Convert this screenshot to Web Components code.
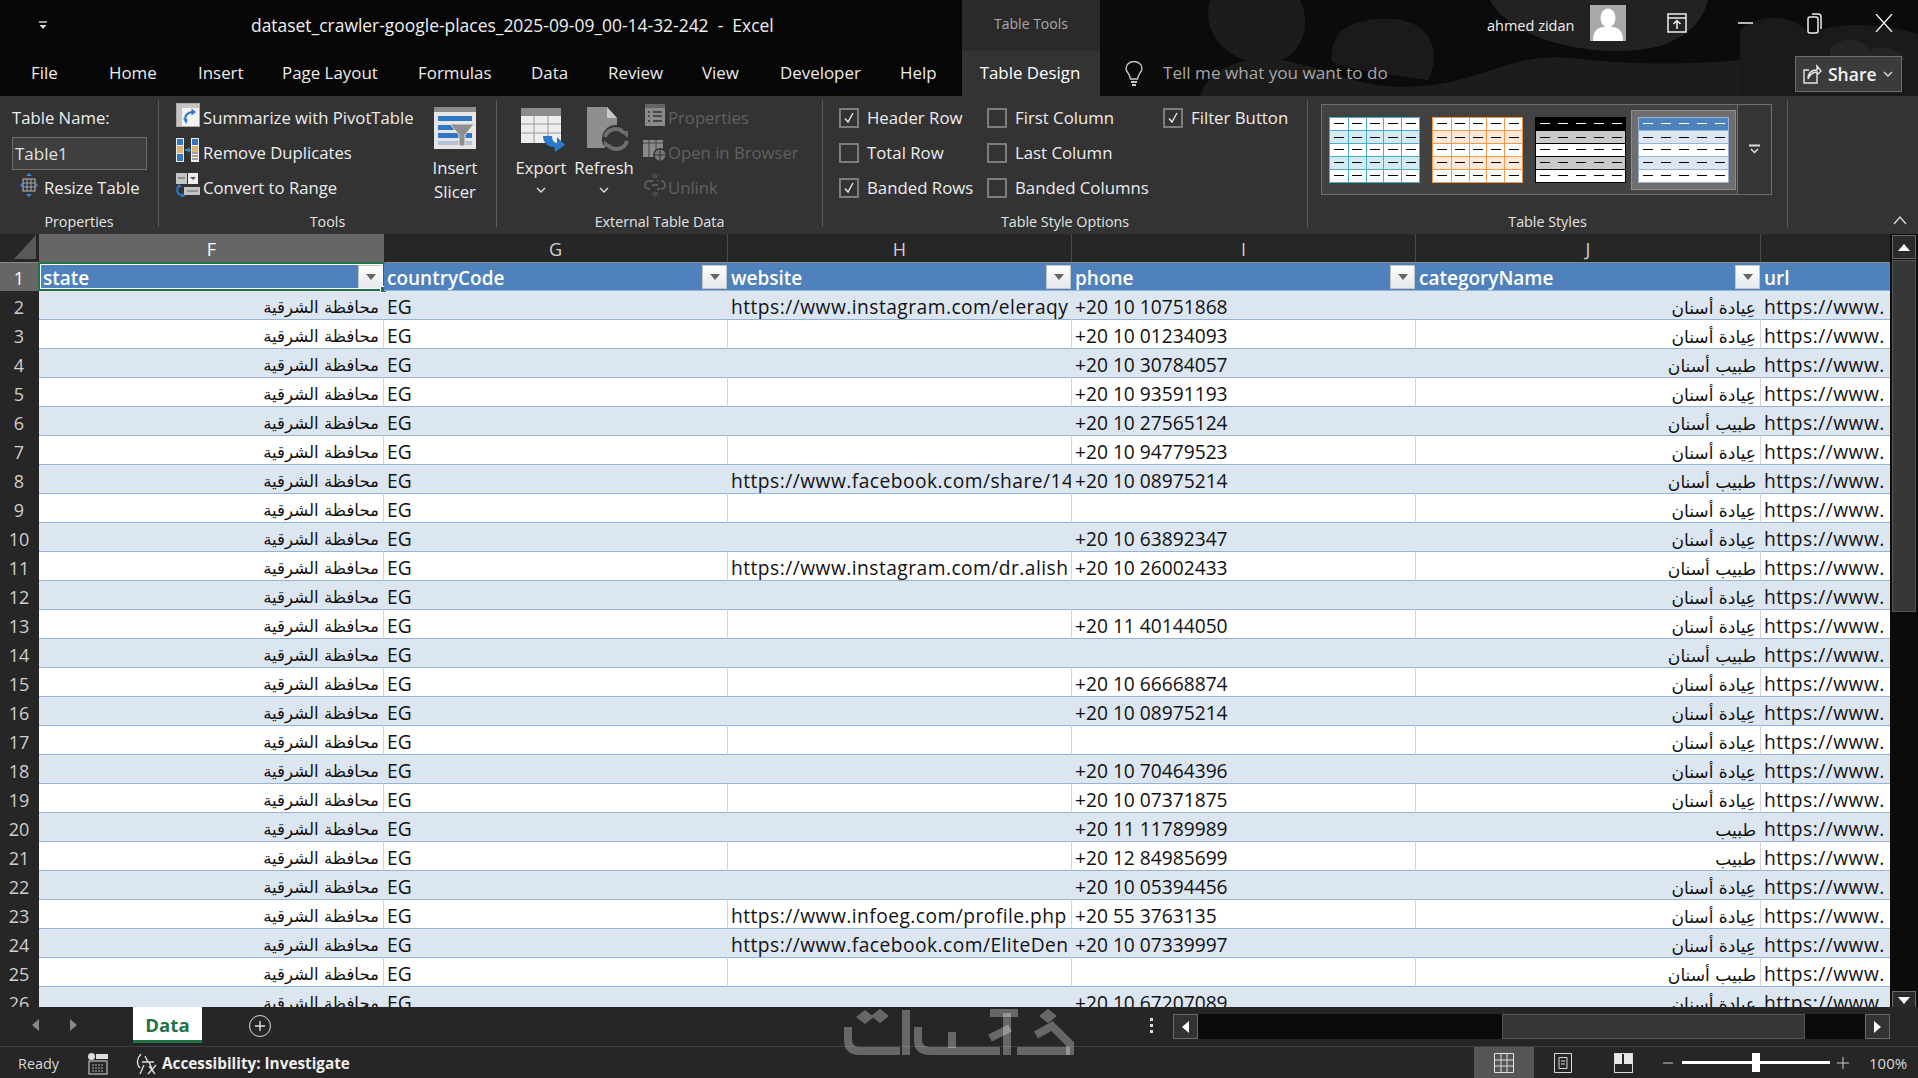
<!DOCTYPE html>
<html lang="en"><head><meta charset="utf-8"><title>Excel</title>
<style>
html,body{margin:0;padding:0;background:#262626;}
body{width:1918px;height:1078px;overflow:hidden;font-family:"Open Sans","DejaVu Sans",sans-serif;}
</style></head><body>
<x-app></x-app>
<script>
function def(name,css,html){
  customElements.define(name,class extends HTMLElement{
    connectedCallback(){
      if(this.shadowRoot)return;
      const r=this.attachShadow({mode:'open'});
      r.innerHTML='<style>'+css+'</style>'+(typeof html==='function'?html(this):html);
    }
  });
}
/* ---------- icons ---------- */
const I={
 qat:`<svg width="12" height="12" viewBox="0 0 12 12"><path d="M2 2h8" stroke="#ddd" stroke-width="1.4"/><path d="M2.5 5h7L6 9z" fill="#ddd"/></svg>`,
 avatar:`<svg width="36" height="36" viewBox="0 0 36 36"><rect width="36" height="36" fill="#a9a9a9"/><ellipse cx="18" cy="13" rx="7.5" ry="9.5" fill="#fff"/><path d="M3 36c0-10 4-13 10-14h10c6 1 10 4 10 14z" fill="#fff"/></svg>`,
 rdisp:`<svg width="20" height="20" viewBox="0 0 20 20" fill="none" stroke="#eee" stroke-width="1.5"><rect x="1" y="1" width="18" height="18"/><path d="M1 5h18"/><path d="M10 16V8M6.5 11 10 7.5l3.500 3.500"/></svg>`,
 min:`<svg width="16" height="16" viewBox="0 0 16 16"><path d="M0 8h15" stroke="#eee" stroke-width="1.500"/></svg>`,
 max:`<svg width="16" height="24" viewBox="0 0 16 24" fill="none" stroke="#eee" stroke-width="1.500"><rect x="1" y="6" width="10" height="16" rx="2"/><path d="M5 3h6a3 3 0 0 1 3 3v12"/></svg>`,
 close:`<svg width="18" height="18" viewBox="0 0 18 18"><path d="M1 0 17 18M17 0 1 18" stroke="#eee" stroke-width="1.400"/></svg>`,
 bulb:`<svg width="20" height="26" viewBox="0 0 20 26" fill="none" stroke="#c8c8c8" stroke-width="1.400"><path d="M6.500 18C6 13 2 11 2 7.500a8 7 0 0 1 16 0C18 11 14 13 13.500 18z"/><path d="M7 21h6M8 24h4" stroke-width="2"/></svg>`,
 share:`<svg width="20" height="20" viewBox="0 0 20 20" fill="none" stroke="#e6e6e6" stroke-width="1.400"><path d="M7 6H2v13h13v-7"/><path d="M6 15C6 9 9 6 15 6V2l4 5-4 4V8c-4 0-7 2-9 7z"/></svg>`,
 resize:`<svg width="18" height="24" viewBox="0 0 18 24"><rect x="3" y="6" width="12" height="12" fill="none" stroke="#bdbdbd"/><path d="M3 10h12M3 14h12M7 6v12M11 6v12" stroke="#bdbdbd" stroke-width=".8"/><path d="M9 0l3 3H6zM9 24l-3-3h6zM0 12l3-3v6zM18 12l-3 3V9z" fill="#3f8ad6"/></svg>`,
 pivot:`<svg width="24" height="24" viewBox="0 0 24 24"><rect x=".5" y=".5" width="23" height="23" fill="#f2f2f2" stroke="#aaa"/><rect x="1" y="1" width="22" height="4" fill="#c4c4c4"/><rect x="1" y="1" width="5" height="22" fill="#c4c4c4"/><path d="M10 17.500C8 13 11 9.500 17 9" fill="none" stroke="#2a78c8" stroke-width="2"/><path d="M15.500 5.500 20 9l-4.500 3.500zM7 15.500l4.500 1-1 4.500z" fill="#2a78c8"/></svg>`,
 dups:`<svg width="24" height="24" viewBox="0 0 24 24"><rect x="0" y="0" width="8" height="24" fill="#eee"/><rect x="1" y="1" width="6" height="6" fill="#2f76c4"/><rect x="1" y="8" width="6" height="7" fill="#d9b676"/><rect x="1" y="16" width="6" height="7" fill="#2f76c4"/><rect x="15" y="0" width="8" height="24" fill="#eee"/><rect x="16" y="1" width="6" height="6" fill="#2f76c4"/><rect x="16" y="8" width="6" height="6" fill="#d9b676"/><path d="M16 15h6M16 18h6M16 21h6" stroke="#555"/><path d="M9 11h3V9l3 3-3 3v-2H9z" fill="#3b8ad8"/></svg>`,
 conv:`<svg width="24" height="24" viewBox="0 0 24 24"><rect x="0" y="0" width="11" height="11" fill="#c4c4c4"/><path d="M2 5h7" stroke="#555"/><rect x="12" y="0" width="10" height="11" fill="#eee"/><path d="M14 4h6l-3 3z" fill="#555"/><rect x="8" y="14" width="16" height="8" fill="#c4c4c4"/><path d="M11 18h11" stroke="#666"/><path d="M3 13C-1 18 2 22 8 23" fill="none" stroke="#2a78c8" stroke-width="2"/><path d="M0 15l3-4 3 3zM6 20l4 3-4 1z" fill="#2a78c8"/></svg>`,
 slicer:`<svg width="42" height="42" viewBox="0 0 42 42"><rect width="42" height="42" fill="#e6e6e6"/><rect width="42" height="5" fill="#8c8c8c"/><rect x="4" y="9" width="34" height="5" fill="#2f76c4"/><rect x="4" y="18" width="24" height="5" fill="#2f76c4"/><rect x="4" y="26" width="34" height="5" fill="#2f76c4"/><rect x="4" y="34" width="34" height="4" fill="#b4c4d8"/><path d="M16 17h24l-9 11v11h-6V28z" fill="#8f8f8f" stroke="#e6e6e6"/></svg>`,
 exportI:`<svg width="46" height="46" viewBox="0 0 46 46"><rect x="1" y="1" width="40" height="35" fill="#eee"/><rect x="1" y="1" width="40" height="8" fill="#8c8c8c"/><path d="M1 17h40M1 26h40M14 9v27M28 9v27" stroke="#9a9a9a"/><path d="M23 29h9c0 5 3 7 5 7v-6l8 8-10 7-1-5c-6 0-11-4-11-11z" fill="#2a78c8"/></svg>`,
 refresh:`<svg width="42" height="46" viewBox="0 0 42 46"><path d="M0 0h20l10 11v30H0z" fill="#8e8e8e"/><path d="M20 0v11h10z" fill="#c8c8c8"/><circle cx="29" cy="32" r="14" fill="#333"/><path d="M18 30a11 11 0 0 1 19-4M40 34a11 11 0 0 1-19 4" fill="none" stroke="#6e6e6e" stroke-width="4"/><path d="M33 24h8v7zM25 40h-8v-7z" fill="#6e6e6e"/></svg>`,
 props:`<svg width="20" height="22" viewBox="0 0 20 22"><rect width="20" height="22" fill="#8a8a8a"/><rect width="20" height="4" fill="#656565"/><path d="M3 8h2M8 8h9M3 12h2M8 12h9M3 17h2M8 17h9" stroke="#333" stroke-width="1.500"/></svg>`,
 browser:`<svg width="24" height="24" viewBox="0 0 24 24"><rect y="2" width="20" height="17" fill="#8a8a8a"/><path d="M6 2v17M13 2v17M0 5h20" stroke="#444"/><circle cx="17" cy="17" r="7" fill="#333"/><circle cx="17" cy="17" r="5.500" fill="#777"/><path d="M11 17h12M17 11v12" stroke="#333"/></svg>`,
 unlink:`<svg width="22" height="24" viewBox="0 0 22 24" fill="none" stroke="#5c5c5c" stroke-width="2"><path d="M9 8H5a4 4 0 0 0 0 8h1M13 8h1M16 16h-3M17 8a4 4 0 0 1 0 8M8 12h6"/><path d="M8 1l2 4M11 0v5M14 1l-2 4M8 23l2-4M11 24v-5M14 23l-2-4" stroke-width="1"/></svg>`,
 chev:`<svg width="10" height="7" viewBox="0 0 10 7"><path d="M1 1l4 4 4-4" fill="none" stroke="#ddd" stroke-width="1.400"/></svg>`,
 more:`<svg width="12" height="12" viewBox="0 0 12 12" fill="none" stroke="#ddd" stroke-width="1.500"><path d="M0 1.500h11" stroke-width="2"/><path d="M2 5l3.500 3.500L9 5"/></svg>`,
 up:`<svg width="14" height="10" viewBox="0 0 14 10"><path d="M1 9l6-7 6 7" fill="none" stroke="#ddd" stroke-width="1.300"/></svg>`
};
/* ---------- title bar ---------- */
def('x-titlebar',`
 :host{display:flex;align-items:center;height:51px;font-size:15.500px;color:#e8e8e8;position:relative;z-index:1}
 .qat{margin-left:37px;width:214px;display:flex}
 .title{width:711px;white-space:pre;font-size:17.450px;color:#f0f0f0;padding-bottom:1px}
 .tools{width:138px;height:51px;background:#2a2a2a;display:flex;align-items:center;justify-content:center;font-size:14px;color:#a8a8a8;box-sizing:border-box;padding-bottom:4px}
 .acct{margin-left:387px;width:103px;font-size:14.500px;color:#f0f0f0}
 .avatar{width:36px;height:36px;margin-top:-6px}
 .ctl{display:flex;align-items:center;justify-content:center;width:69px;margin-top:-6px}
`,`<div class="qat">${I.qat}</div><div class="title">dataset_crawler-google-places_2025-09-09_00-14-32-242  -  Excel</div>
 <div class="tools">Table Tools</div><div class="acct">ahmed zidan</div><div class="avatar">${I.avatar}</div>
 <div class="ctl" style="margin-left:16px">${I.rdisp}</div><div class="ctl">${I.min}</div><div class="ctl">${I.max}</div><div class="ctl">${I.close}</div>`);
/* ---------- tabs ---------- */
def('x-tabs',`
 :host{display:flex;align-items:center;height:45px;font-size:16.900px;color:#ececec;position:relative;z-index:1}
 span{display:block;white-space:nowrap}
 .on{background:#333;height:45px;width:138px;display:flex;align-items:center;justify-content:center;color:#fff;padding:0 2px 2px 0;box-sizing:border-box}
 .bulb{margin-left:24px;display:flex}
 .tell{margin-left:19px;color:#a6a6a6;font-size:17.100px;padding-bottom:2px}
 .share{margin-left:auto;margin-right:16px;margin-top:1px;width:107px;height:36px;box-sizing:border-box;background:#3b3b3b;border:1px solid #6d6d6d;display:flex;align-items:center;padding-left:6px;gap:6px;font-weight:600;font-size:17.500px;color:#f2f2f2}
`,()=>{
 const t=[['File',31],['Home',109],['Insert',198],['Page Layout',282],['Formulas',418],['Data',531],['Review',608],['View',702],['Developer',780],['Help',900]];
 return `<div style="display:flex;width:942px;height:45px;align-items:center;padding-bottom:2px;box-sizing:border-box">`+t.map((x,i)=>`<span style="margin-left:${i==0?31:0}px;width:${i<9?t[i+1][1]-x[1]:42}px">${x[0]}</span>`).join('')+`</div>
 <div class="on" style="margin-left:20px">Table Design</div><div class="bulb">${I.bulb}</div><div class="tell">Tell me what you want to do</div>
 <div class="share">${I.share}<span>Share</span>${I.chev}</div>`;
});
/* ---------- ribbon parts ---------- */
def('x-rgroup',`
 :host{display:flex;flex-direction:column;height:127px;box-sizing:border-box;border-right:1px solid #5a5a5a;flex:none}
 .body{height:106px;display:flex;align-items:stretch;padding-left:var(--pl,0);flex:none}
 .label{height:21px;line-height:32px;text-align:center;font-size:14.300px;color:#e4e4e4;white-space:nowrap}
`,h=>`<div class="body"><slot></slot></div><div class="label">${h.getAttribute('label')}</div>`);
def('x-ritem',`
 :host{display:flex;align-items:center;height:35px;white-space:nowrap;font-size:16.700px;color:#ededed}
 :host([disabled]){color:#606060}
 .i{display:flex;justify-content:center;align-items:center;width:var(--iw,30px);flex:none}
`,h=>`<div class="i"><slot name="icon"></slot></div><slot></slot>`);
def('x-rbig',`
 :host{display:flex;flex-direction:column;align-items:center;font-size:16.700px;color:#ededed;text-align:center;line-height:24px;white-space:nowrap;padding-top:7px;box-sizing:border-box}
 .i{height:49px;display:flex;align-items:flex-start;justify-content:center;padding-left:var(--ipl,0)}
`,`<div class="i"><slot name="icon"></slot></div><slot></slot>`);
def('x-check',`
 :host{display:flex;align-items:center;height:35px;font-size:16.800px;color:#ededed;white-space:nowrap;gap:8px}
 .b{width:20px;height:20px;box-sizing:border-box;border:2px solid #7d7d7d;display:flex;align-items:center;justify-content:center}
`,h=>`<div class="b">${h.hasAttribute('checked')?'<svg width="12" height="12" viewBox="0 0 12 12"><path d="M2 6.500 5 10l5-9" fill="none" stroke="#eee" stroke-width="1.300"/></svg>':''}</div><slot></slot>`);
def('x-thumb',`
 :host{display:grid;grid-template-rows:repeat(5,1fr);width:91px;height:66px;box-sizing:border-box;border:1px solid var(--b);flex:none}
 .r{display:grid;grid-template-columns:repeat(5,1fr);background:#fff}
 .r+.r{border-top:1px solid var(--b)}
 .r.band{background:var(--band)}
 .r.head{background:var(--head,#fff)}
 .c{display:flex;align-items:center;justify-content:center}
 .c+.c{border-left:1px solid var(--v,transparent)}
 .c i{display:block;width:10px;height:1px;background:#000}
 .head .c i{background:var(--hd,#000)}
`,()=>[0,1,2,3,4].map(i=>`<div class="r ${i==0?'head':''} ${i%2?'band':''}">`+'<div class="c"><i></i></div>'.repeat(5)+`</div>`).join(''));
def('x-gallery',`
 :host{display:flex;width:451px;height:91px;box-sizing:border-box;border:1px solid #6e6e6e;background:#424242;margin:4px 0 0 13px;flex:none}
 .list{display:flex;align-items:center;gap:12px;padding-left:7px;width:415px;box-sizing:border-box;flex:none}
 .sel{background:#6e6e6e;box-shadow:0 0 0 6px #6e6e6e,0 0 0 7px #8d8d8d;display:flex;margin-left:0}
 .more{flex:1;border-left:1px solid #6e6e6e;background:#363636;display:flex;align-items:center;justify-content:center}
`,`<div class="list">
 <x-thumb style="--b:#4bacc6;--v:#4bacc6;--band:#d2eaf1"></x-thumb>
 <x-thumb style="--b:#f79646;--v:#f79646;--band:#fde9d9"></x-thumb>
 <x-thumb style="--b:#000;--band:#c9c9c9;--head:#000;--hd:#fff"></x-thumb>
 <div class="sel"><x-thumb style="--b:#95b3d7;--band:#dce6f1;--head:#4f81bd;--hd:#fff"></x-thumb></div>
 </div><div class="more">${I.more}</div>`);
def('x-ribbon',`
 :host{display:flex;height:138px;box-sizing:border-box;background:#333;padding:4px 0 7px;flex:none;position:relative}
 .col{display:flex;flex-direction:column}
 .tn{display:flex;align-items:center;height:35px;font-size:16.700px;color:#ededed;padding-left:12px}
 .inp{margin:2px 0 0 12px;width:135px;height:33px;box-sizing:border-box;border:1px solid #6d6d6d;background:#3f3f3f;color:#e0e0e0;font-size:17px;display:flex;align-items:center;padding-left:2px}
 .ch{display:block;margin-top:7px;line-height:0}
 .coll{position:absolute;right:11px;bottom:9px;line-height:0}
`,`
 <x-rgroup label="Properties" style="width:159px"><div class="col" style="width:158px">
   <div class="tn">Table Name:</div><div class="inp">Table1</div>
   <x-ritem style="--iw:31px;margin-left:13px;margin-top:0"><span slot="icon">${I.resize}</span>Resize Table</x-ritem></div></x-rgroup>
 <x-rgroup label="Tools" style="width:338px"><div class="col" style="width:275px;padding-left:14px;box-sizing:border-box">
   <x-ritem><span slot="icon">${I.pivot}</span>Summarize with PivotTable</x-ritem>
   <x-ritem><span slot="icon">${I.dups}</span>Remove Duplicates</x-ritem>
   <x-ritem><span slot="icon">${I.conv}</span>Convert to Range</x-ritem></div>
   <x-rbig style="width:42px"><span slot="icon">${I.slicer}</span>Insert<br>Slicer</x-rbig></x-rgroup>
 <x-rgroup label="External Table Data" style="width:326px">
   <x-rbig style="width:62px;margin-left:13px;--ipl:4px"><span slot="icon">${I.exportI}</span>Export<span class="ch">${I.chev}</span></x-rbig>
   <x-rbig style="width:64px;--ipl:8px"><span slot="icon">${I.refresh}</span>Refresh<span class="ch">${I.chev}</span></x-rbig>
   <div class="col" style="--iw:26px;margin-left:6px">
   <x-ritem disabled><span slot="icon">${I.props}</span>Properties</x-ritem>
   <x-ritem disabled><span slot="icon">${I.browser}</span>Open in Browser</x-ritem>
   <x-ritem disabled><span slot="icon">${I.unlink}</span>Unlink</x-ritem></div></x-rgroup>
 <x-rgroup label="Table Style Options" style="width:485px;--pl:16px">
   <div class="col" style="width:148px"><x-check checked>Header Row</x-check><x-check>Total Row</x-check><x-check checked>Banded Rows</x-check></div>
   <div class="col" style="width:176px"><x-check>First Column</x-check><x-check>Last Column</x-check><x-check>Banded Columns</x-check></div>
   <div class="col"><x-check checked>Filter Button</x-check></div></x-rgroup>
 <x-rgroup label="Table Styles" style="width:480px"><x-gallery></x-gallery></x-rgroup>
 <div class="coll">${I.up}</div>`);
/* ---------- sheet ---------- */
const CL='عِيادة أسنان',DR='طبيب أسنان',DO='طبيب',ST='محافظة الشرقية';
const ROWS=[
['https://www.instagram.com/eleraqy','+20 10 10751868',CL],
['','+20 10 01234093',CL],['','+20 10 30784057',DR],['','+20 10 93591193',CL],['','+20 10 27565124',DR],['','+20 10 94779523',CL],
['https://www.facebook.com/share/14','+20 10 08975214',DR],['','',CL],['','+20 10 63892347',CL],
['https://www.instagram.com/dr.alish','+20 10 26002433',DR],['','',CL],['','+20 11 40144050',CL],['','',DR],
['','+20 10 66668874',CL],['','+20 10 08975214',CL],['','',CL],['','+20 10 70464396',CL],['','+20 10 07371875',CL],
['','+20 11 11789989',DO],['','+20 12 84985699',DO],['','+20 10 05394456',CL],
['https://www.infoeg.com/profile.php','+20 55 3763135',CL],['https://www.facebook.com/EliteDen','+20 10 07339997',CL],['','',DR],['','+20 10 67207089',CL]];
def('x-colheads',`
 :host{display:flex;height:28px;background:#262626;color:#cfcfcf;font-size:18px;flex:none}
 div{width:344px;box-sizing:border-box;border-right:1px solid #4c4c4c;display:flex;align-items:center;justify-content:center;flex:none;padding-top:1px}
 .corner{width:39px;border:0;background:#262626;justify-content:flex-end;align-items:flex-end;padding:0 3px 3px 0}
 .on{background:#666;color:#fff;width:345px;border:0}
 .last{width:130px;border:0}
`,`<div class="corner"><svg width="22" height="24" viewBox="0 0 22 24"><path d="M22 0v24H0z" fill="#595959"/></svg></div><div class="on">F</div><div>G</div><div>H</div><div>I</div><div style="width:345px">J</div><div class="last"></div>`);
def('x-row',`
 :host{display:flex;height:29px;flex:none;font-family:"Open Sans","DejaVu Sans",sans-serif;font-size:19.200px;color:#111;box-sizing:border-box}
 .n{width:39px;flex:none;background:#262626;color:#cfcfcf;display:flex;align-items:center;justify-content:center;font-size:18px;box-sizing:border-box;padding:2px 1px 0 0}
 .c{width:344px;flex:none;box-sizing:border-box;background:#fff;border-bottom:1px solid #95b3d7;border-right:1px solid #d4d4d4;display:flex;align-items:center;padding:4px 0 0 3px;overflow:hidden;white-space:nowrap;line-height:24px}
 .c.w{letter-spacing:.47px}
 .c.l{width:130px;border-right:0;letter-spacing:.47px}
 .c.ar{direction:rtl;padding:5px 4px 0 0;font-family:"DejaVu Sans",sans-serif;font-size:16.600px}
 .c.cat{font-size:17.100px;width:345px}
 .c.f{width:345px}
 :host(.band) .c{background:#dce6f1;border-right-color:#dce6f1}
`,h=>{
 const [w,p,c]=JSON.parse(h.dataset.v);
 return `<div class="n">${h.dataset.n}</div><div class="c ar f">${ST}</div><div class="c">EG</div><div class="c w">${w}</div><div class="c">${p}</div><div class="c ar cat">${c}</div><div class="c l">https://www.</div>`;
});
def('x-headrow',`
 :host{display:flex;height:29px;flex:none;font-family:"Open Sans",sans-serif;font-size:19px;font-weight:600;color:#fff;border-top:1px solid #8a8a8a;box-sizing:border-box}
 .n{width:39px;flex:none;background:#666;color:#fff;display:flex;align-items:center;justify-content:center;font-size:18px;font-weight:400;padding:2px 1px 0 0;box-sizing:border-box}
 .c{width:344px;flex:none;box-sizing:border-box;background:#4f81bd;display:flex;align-items:center;padding:0 0 0 3px;position:relative;border-bottom:1px solid #95b3d7;line-height:26px}
 .c b{font-weight:600;display:block;padding-top:2px}
 .f{width:345px;padding-left:4px}
 .l{width:130px}
 .btn{margin-left:auto;width:25px;height:24px;box-sizing:border-box;background:linear-gradient(#fff,#e4e8ec);border:1px solid #c4c4c4;display:flex;align-items:center;justify-content:center;margin-right:1px}
 .btn::after{content:"";border:5px solid transparent;border-top:6px solid #666;border-bottom:0}
 .sel{position:absolute;left:-1px;top:-1px;right:-1px;bottom:-1px;border:2px solid #217346;box-shadow:inset 0 0 0 1px #fff;pointer-events:none}
 .h{position:absolute;right:-3px;bottom:-3px;width:7px;height:7px;background:#217346;border:1px solid #fff;box-sizing:border-box}
`,`<div class="n">1</div>
 <div class="c f"><b>state</b><span class="btn"></span><span class="sel"></span><span class="h"></span></div><div class="c"><b>countryCode</b><span class="btn"></span></div><div class="c"><b>website</b><span class="btn"></span></div><div class="c"><b>phone</b><span class="btn"></span></div><div class="c" style="width:345px"><b>categoryName</b><span class="btn"></span></div><div class="c l"><b>url</b></div>`);
def('x-vscroll',`
 :host{display:flex;flex-direction:column;width:28px;flex:none;background:#0b0b0b;box-sizing:border-box;padding:1px 2px 0;gap:0}
 .b{height:24px;flex:none;border:1px solid #6a6a6a;background:#2a2a2a;display:flex;align-items:center;justify-content:center;box-sizing:border-box}
 .t{height:352px;flex:none;background:#373737;border:1px solid #555;box-sizing:border-box;margin-top:1px}
 .s{flex:1}
`,`<div class="b"><svg width="12" height="7"><path d="M0 7h12L6 0z" fill="#fff"/></svg></div><div class="t"></div><div class="s"></div><div class="b" style="height:17px;margin-bottom:-1px;border-bottom:0"><svg width="12" height="7"><path d="M0 0h12L6 7z" fill="#fff"/></svg></div>`);
def('x-sheet',`
 :host{display:flex;height:773px;flex:none;overflow:hidden;background:#0b0b0b}
 .g{width:1890px;flex:none;display:flex;flex-direction:column;overflow:hidden}
`,()=>`<div class="g"><x-colheads></x-colheads><x-headrow></x-headrow>`+ROWS.map((r,i)=>`<x-row class="${i%2==0?'band':''}" data-n="${i+2}" data-v='${JSON.stringify(r)}'></x-row>`).join('')+`</div><x-vscroll></x-vscroll>`);
/* ---------- sheet bar ---------- */
def('x-sheetbar',`
 :host{display:flex;align-items:flex-start;height:39px;background:#262626;flex:none;box-sizing:border-box;color:#bbb}
 .nav{display:flex;gap:31px;margin-left:32px;width:101px;height:39px;align-items:center;padding-bottom:3px;box-sizing:border-box}
 .tab{width:69px;height:36px;background:#fff;border-bottom:3px solid #217346;box-sizing:border-box;display:flex;align-items:center;justify-content:center;color:#217346;font-weight:700;font-size:18.600px;padding-top:2px}
 .add{margin-left:47px;margin-top:8px;width:22px;height:22px;border:1.500px solid #d8d8d8;border-radius:50%;box-sizing:border-box;display:flex;align-items:center;justify-content:center}
 .dots{margin-left:879px;margin-top:11px;width:3px;height:15px;background:repeating-linear-gradient(#ddd 0 3px,transparent 3px 6px)}
 .sb{margin-left:20px;margin-top:7px;display:flex;height:25px;width:717px;background:#0b0b0b}
 .bt{width:25px;height:25px;flex:none;border:1px solid #6a6a6a;background:#333;box-sizing:border-box;display:flex;align-items:center;justify-content:center}
 .th{margin-left:304px;width:303px;background:#373737;border:1px solid #555;box-sizing:border-box}
`,`<div class="nav"><svg width="7" height="12"><path d="M7 0v12L0 6z" fill="#888"/></svg><svg width="7" height="12"><path d="M0 0v12l7-6z" fill="#888"/></svg></div>
 <div class="tab">Data</div>
 <div class="add"><svg width="12" height="12"><path d="M6 1v10M1 6h10" stroke="#e0e0e0" stroke-width="1.400"/></svg></div>
 <div class="dots"></div>
 <div class="sb"><div class="bt"><svg width="7" height="12"><path d="M7 0v12L0 6z" fill="#fff"/></svg></div><div class="th"></div><div style="flex:1"></div><div class="bt"><svg width="7" height="12"><path d="M0 0v12l7-6z" fill="#fff"/></svg></div></div>`);
/* ---------- status bar ---------- */
def('x-statusbar',`
 :host{display:flex;align-items:center;height:32px;background:#262626;border-top:1px solid #3f3f3f;box-sizing:border-box;font-size:14.400px;color:#d8d8d8;flex:none}
 .rd{margin-left:18px;width:70px;padding-top:1px}
 .ic{display:flex;width:48px;flex:none}
 .acc{font-weight:700;color:#eee;font-size:15.300px;width:1312px;padding-top:1px}
 .v{width:60px;height:31px;display:flex;align-items:center;justify-content:center;flex:none}
 .v.on{background:#555}
 .sl{width:148px;height:3px;background:#fff;position:relative;margin:0 0 0 8px;flex:none}
 .sl::after{content:"";position:absolute;left:70px;top:-8px;width:8px;height:19px;background:#fff}
 .m{display:flex;width:12px;justify-content:center;flex:none}
`,`<div class="rd">Ready</div>
 <div class="ic"><svg width="20" height="24" viewBox="0 0 20 24"><rect x="0" y="2" width="7" height="7" rx="3.500" fill="#ddd"/><rect x="8" y="3" width="12" height="5" fill="#ddd"/><rect x="1" y="10" width="18" height="13" fill="none" stroke="#ddd"/><path d="M4 14h12M4 17h12M4 20h12" stroke="#bbb" stroke-dasharray="2 1"/></svg></div>
 <div class="ic" style="width:26px"><svg width="22" height="24" viewBox="0 0 22 24" fill="none" stroke="#ddd" stroke-width="1.300"><path d="M5 3C1 7 0 13 4 17"/><path d="M9 5l3 6h6M6 11h7l4 9M8 14l-4 9"/><path d="M13 15l6 8M20 14l-8 9"/></svg></div>
 <div class="acc">Accessibility: Investigate</div>
 <div class="v on"><svg width="20" height="20" fill="none" stroke="#e0e0e0"><path d="M.5.500h19v19H.500zM7 .5v19M13 .5v19M.5 7h19M.5 13h19"/></svg></div>
 <div class="v" style="margin-left:-1px;"><svg width="18" height="20" fill="none" stroke="#d8d8d8"><path d="M.5.500h17v19H.500z"/><path d="M5 4.500h8v11H5zM7 8h4M7 11h4"/></svg></div>
 <div class="v"><svg width="19" height="20"><rect x=".5" y=".5" width="18" height="19" fill="none" stroke="#d8d8d8"/><rect x="1" y="1" width="7" height="10" fill="#e8e8e8"/><rect x="10" y="1" width="8" height="10" fill="#e8e8e8"/></svg></div>
 <div class="m" style="margin-left:9px"><svg width="10" height="2"><path d="M0 1h10" stroke="#ccc"/></svg></div>
 <div class="sl"></div>
 <div class="m" style="margin-left:7px"><svg width="12" height="12"><path d="M6 0v12M0 6h12" stroke="#ccc"/></svg></div>
 <div style="margin-left:20px;font-size:15px;white-space:nowrap">100%</div>`);
/* ---------- watermark logo ---------- */
def('x-watermark',`
 :host{position:absolute;left:800px;top:990px;width:320px;height:88px;pointer-events:none;z-index:3}
 svg{display:block}
`,`<svg width="320" height="88" viewBox="0 0 320 88" fill="none" stroke="rgba(255,255,255,.30)" stroke-width="8"><title>خمسات</title>
 <path d="M48 37V50Q48 61 60 61H100"/><path d="M106 20V65"/><path d="M118 37V50Q118 61 130 61H200"/><path d="M152 42V58"/>
 <path d="M190 23H218"/><path d="M207 23V65"/><path d="M190 48 210 38"/><path d="M217 61H270"/><path d="M236 45 252 36 270 54V65"/>
 <path d="M56 27 65 20 74 27 65 34zM71 26 80 19 89 26 80 33z" fill="rgba(255,255,255,.30)" stroke="none"/>
 <path d="M239 26 248 19 257 26 248 33z" fill="rgba(255,255,255,.30)" stroke="none"/></svg>`);
/* ---------- app ---------- */
def('x-app',`
 :host{display:flex;flex-direction:column;width:1918px;height:1078px;position:relative;overflow:hidden;background:#262626}
 .top{position:relative;height:96px;background:#060606;flex:none}
 .art{position:absolute;left:0;top:0;pointer-events:none}
`,`<div class="top"><svg class="art" width="1918" height="96" viewBox="0 0 1918 96">
  <path d="M1100 0H1918V96H1100z" fill="#0b0b0b"/>
  <path d="M1210 0h90c10 20 6 45-14 58-20 12-50 4-66-14-12-14-14-30-10-44z" fill="#1c1c1c"/>
  <path d="M1342 30c20-14 60-16 78-2 16 12 18 34 8 52-40-6-80-10-96-18-2-12 2-24 10-32z" fill="#1a1a1a"/>
  <path d="M1490 0h218c-6 26-30 46-70 50-60 6-130-14-148-50z" fill="#222"/>
  <path d="M1200 96c10-30 50-44 92-34 60 14 70 28 130 24 60-4 90-34 150-28 70 8 120 6 170 2 40-4 80 0 176 4v32z" fill="#1c1c1c"/>
  <path d="M1740 30c30-22 60-10 70 4 20-10 60-14 108 0V96h-178z" fill="#1a1a1a"/>
  <path d="M1830 50c10-14 30-14 40 0 16-6 30 0 36 10l-76 6z" fill="#242424"/>
 </svg>
 <x-titlebar></x-titlebar><x-tabs></x-tabs></div>
 <x-ribbon></x-ribbon><x-sheet></x-sheet><x-sheetbar></x-sheetbar><x-statusbar></x-statusbar><x-watermark></x-watermark>`);
</script></body></html>
